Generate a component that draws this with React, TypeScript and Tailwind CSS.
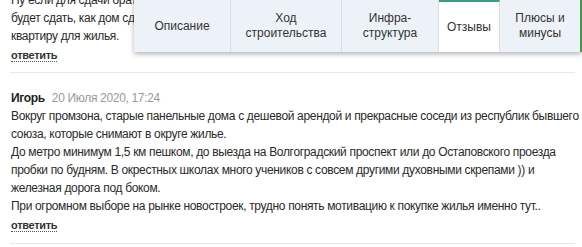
import React from "react";

const Reply = () => (
  <div className="leading-[18px]">
    <span className="text-[11px] font-bold text-[#333] tracking-[-0.3px] border-b border-dotted border-[#555] leading-[13px]">ответить</span>
  </div>
);

export default function App() {
  return (
    <div
      className="relative w-[582px] h-[247px] overflow-hidden bg-white text-[#2a2a2a]"
      style={{ fontFamily: '"Liberation Sans", Arial, sans-serif' }}
    >
      <div className="mt-[-9px] pl-[11px] pr-[7px] tracking-[-0.33px]">
        <div className="text-[12px] leading-[18px] whitespace-nowrap">
          Ну если для сдачи брать
          <br />
          будет сдать, как дом сдадут
          <br />
          квартиру для жилья.
        </div>
        <Reply />
        <div className="mt-[9px] border-t border-[#e3eaef] ml-[-1px]" />
        <div className="pt-[16px] text-[12px] leading-[18px]">
          <div className="flex items-baseline gap-[7px]">
            <span className="text-[12px] font-bold text-[#222]">Игорь</span>
            <span className="text-[12px] text-[#9a9a9a]">20 Июля 2020, 17:24</span>
          </div>
          <div className="whitespace-nowrap">
            Вокруг промзона, старые панельные дома с дешевой арендой и прекрасные соседи из республик бывшего
            <br />
            союза, которые снимают в округе жилье.
            <br />
            До метро минимум 1,5 км пешком, до выезда на Волгоградский проспект или до Остаповского проезда
            <br />
            пробки по будням. В окрестных школах много учеников с совсем другими духовными скрепами )) и
            <br />
            железная дорога под боком.
            <br />
            При огромном выборе на рынке новостроек, трудно понять мотивацию к покупке жилья именно тут..
          </div>
          <div className="pt-[1px]">
            <Reply />
          </div>
        </div>
        <div className="mt-[9px] border-t border-[#e3eaef] ml-[-1px]" />
      </div>

      <div className="absolute left-[134px] top-0 right-0 h-[52px] flex bg-[#edf2f9] shadow-[0_2px_5px_rgba(0,0,0,0.3)] border-r-[2px] border-[#3f9a4a] text-[12px] leading-[15px] text-[#333]">
        <div className="w-[97px] flex items-center justify-center text-center border-r border-[#d6dee8]">Описание</div>
        <div className="w-[111px] flex items-center justify-center text-center border-r border-[#d6dee8]">
          Ход
          <br />
          строительства
        </div>
        <div className="w-[97px] flex items-center justify-center text-center border-r border-[#d6dee8]">
          Инфра-
          <br />
          структура
        </div>
        <div className="w-[61px] flex items-center justify-center text-center bg-white border-t-[2px] border-t-[#3a9a86] border-r border-r-[#d6dee8]">
          Отзывы
        </div>
        <div className="flex-1 flex items-center justify-center text-center">
          Плюсы и
          <br />
          минусы
        </div>
      </div>
    </div>
  );
}
